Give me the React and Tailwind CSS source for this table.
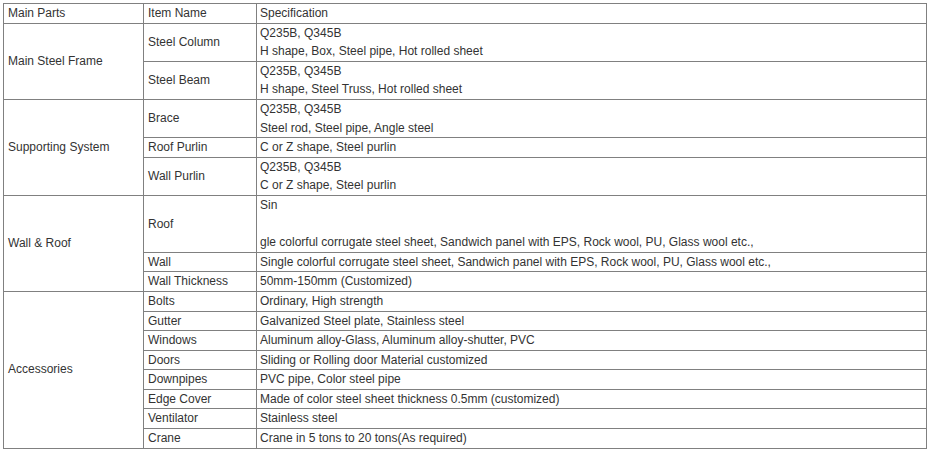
import React from "react";

const td = "border border-[#808080] px-[4px] py-0 align-middle";
const tdS = "border border-[#808080] pl-[3px] pr-[4px] py-0 align-middle";

function SpecLines({ lines }) {
  return lines.map((l, i) => (
    <div key={i} className="h-[18.6px] whitespace-nowrap">{l}</div>
  ));
}

export default function App() {
  const rows = [];
  return (
    <div className="bg-white w-[929px] h-[451px] pt-[3px] pl-[3px]">
      <table
        className="table-fixed border-collapse w-[923px] text-[12px] leading-[18.6px] text-[#333333]"
        style={{ fontFamily: "Arial, 'Liberation Sans', sans-serif" }}
      >
        <colgroup>
          <col className="w-[140px]" />
          <col className="w-[113px]" />
          <col className="w-[670px]" />
        </colgroup>
        <tbody>
          <tr>
            <td className={td}>Main Parts</td>
            <td className={td}>Item Name</td>
            <td className={tdS}>Specification</td>
          </tr>
          <tr>
            <td className={td} rowSpan={2}>Main Steel Frame</td>
            <td className={td}>Steel Column</td>
            <td className={tdS}>
              <SpecLines lines={["Q235B, Q345B", "H shape, Box, Steel pipe, Hot rolled sheet"]} />
            </td>
          </tr>
          <tr>
            <td className={td}>Steel Beam</td>
            <td className={tdS}>
              <SpecLines lines={["Q235B, Q345B", "H shape, Steel Truss, Hot rolled sheet"]} />
            </td>
          </tr>
          <tr>
            <td className={td} rowSpan={3}>Supporting System</td>
            <td className={td}>Brace</td>
            <td className={tdS}>
              <SpecLines lines={["Q235B, Q345B", "Steel rod, Steel pipe, Angle steel"]} />
            </td>
          </tr>
          <tr>
            <td className={td}>Roof Purlin</td>
            <td className={tdS}>C or Z shape, Steel purlin</td>
          </tr>
          <tr>
            <td className={td}>Wall Purlin</td>
            <td className={tdS}>
              <SpecLines lines={["Q235B, Q345B", "C or Z shape, Steel purlin"]} />
            </td>
          </tr>
          <tr>
            <td className={td} rowSpan={3}>Wall &amp; Roof</td>
            <td className={td}>Roof</td>
            <td className={tdS}>
              <SpecLines
                lines={[
                  "Sin",
                  "",
                  "gle colorful corrugate steel sheet, Sandwich panel with EPS, Rock wool, PU, Glass wool etc.,",
                ]}
              />
            </td>
          </tr>
          <tr>
            <td className={td}>Wall</td>
            <td className={tdS}>
              Single colorful corrugate steel sheet, Sandwich panel with EPS, Rock wool, PU, Glass wool etc.,
            </td>
          </tr>
          <tr>
            <td className={td}>Wall Thickness</td>
            <td className={tdS}>50mm-150mm (Customized)</td>
          </tr>
          <tr>
            <td className={td} rowSpan={8}>Accessories</td>
            <td className={td}>Bolts</td>
            <td className={tdS}>Ordinary, High strength</td>
          </tr>
          <tr>
            <td className={td}>Gutter</td>
            <td className={tdS}>Galvanized Steel plate, Stainless steel</td>
          </tr>
          <tr>
            <td className={td}>Windows</td>
            <td className={tdS}>Aluminum alloy-Glass, Aluminum alloy-shutter, PVC</td>
          </tr>
          <tr>
            <td className={td}>Doors</td>
            <td className={tdS}>Sliding or Rolling door Material customized</td>
          </tr>
          <tr>
            <td className={td}>Downpipes</td>
            <td className={tdS}>PVC pipe, Color steel pipe</td>
          </tr>
          <tr>
            <td className={td}>Edge Cover</td>
            <td className={tdS}>Made of color steel sheet thickness 0.5mm (customized)</td>
          </tr>
          <tr>
            <td className={td}>Ventilator</td>
            <td className={tdS}>Stainless steel</td>
          </tr>
          <tr>
            <td className={td}>Crane</td>
            <td className={tdS}>Crane in 5 tons to 20 tons(As required)</td>
          </tr>
        </tbody>
      </table>
    </div>
  );
}
